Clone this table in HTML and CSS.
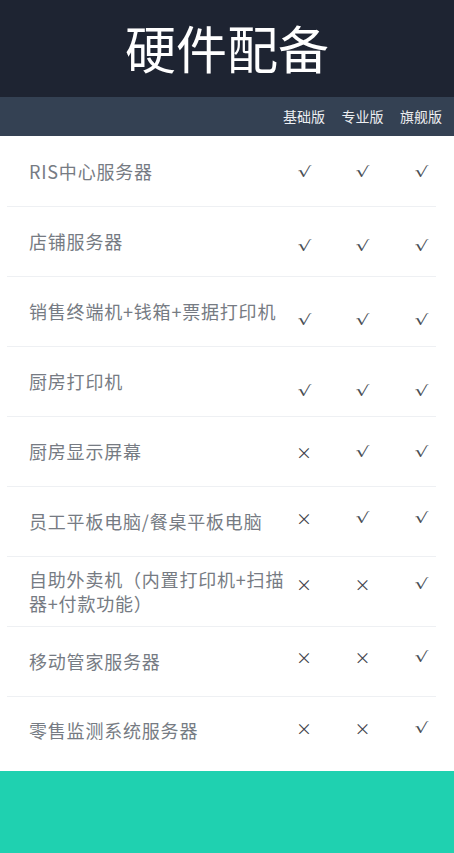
FILE: index.html
```html
<!DOCTYPE html>
<html lang="zh-CN">
<head>
<meta charset="utf-8">
<title>硬件配备</title>
<link rel="stylesheet" href="styles.css">
</head>
<body>
<header class="hero">
  <h1 class="hero-title">硬件配备</h1>
</header>
<div class="tiers">
  <div class="tiers-spacer"></div>
  <div class="cell">基础版</div>
  <div class="cell">专业版</div>
  <div class="cell">旗舰版</div>
</div>
<main class="list">
  <div class="row first">
    <div class="label">RIS中心服务器</div>
    <div class="marks p25"><span class="cell"><i class="ok">√</i></span><span class="cell"><i class="ok">√</i></span><span class="cell"><i class="ok">√</i></span></div>
  </div>
  <div class="row">
    <div class="label">店铺服务器</div>
    <div class="marks p29"><span class="cell"><i class="ok">√</i></span><span class="cell"><i class="ok">√</i></span><span class="cell"><i class="ok">√</i></span></div>
  </div>
  <div class="row">
    <div class="label">销售终端机+钱箱+票据打印机</div>
    <div class="marks p33"><span class="cell"><i class="ok">√</i></span><span class="cell"><i class="ok">√</i></span><span class="cell"><i class="ok">√</i></span></div>
  </div>
  <div class="row">
    <div class="label">厨房打印机</div>
    <div class="marks p34"><span class="cell"><i class="ok">√</i></span><span class="cell"><i class="ok">√</i></span><span class="cell"><i class="ok">√</i></span></div>
  </div>
  <div class="row">
    <div class="label">厨房显示屏幕</div>
    <div class="marks p25"><span class="cell">×</span><span class="cell"><i class="ok">√</i></span><span class="cell"><i class="ok">√</i></span></div>
  </div>
  <div class="row">
    <div class="label">员工平板电脑/餐桌平板电脑</div>
    <div class="marks p21"><span class="cell">×</span><span class="cell"><i class="ok">√</i></span><span class="cell"><i class="ok">√</i></span></div>
  </div>
  <div class="row">
    <div class="label">自助外卖机（内置打印机+扫描器+付款功能）</div>
    <div class="marks p17"><span class="cell">×</span><span class="cell">×</span><span class="cell"><i class="ok">√</i></span></div>
  </div>
  <div class="row">
    <div class="label">移动管家服务器</div>
    <div class="marks p20"><span class="cell">×</span><span class="cell">×</span><span class="cell"><i class="ok">√</i></span></div>
  </div>
  <div class="row last">
    <div class="label">零售监测系统服务器</div>
    <div class="marks p21"><span class="cell">×</span><span class="cell">×</span><span class="cell"><i class="ok">√</i></span></div>
  </div>
</main>
<footer class="foot"></footer>
</body>
</html>
```
FILE: styles.css
```css
* { box-sizing: border-box; }
html, body { margin: 0; padding: 0; }
body {
  width: 454px;
  background: #ffffff;
  font-family: "Noto Sans CJK SC", sans-serif;
}
.hero {
  height: 97px;
  background: #1e2432;
  display: flex;
  align-items: center;
  justify-content: center;
}
.hero-title {
  margin: 0;
  color: #ffffff;
  font-family: "Noto Sans CJK SC", sans-serif;
  font-weight: 400;
  font-size: 51px;
  line-height: 1;
  padding-bottom: 2px;
}
.tiers {
  height: 39px;
  background: #344153;
  display: flex;
  align-items: center;
  gap: 28.5px;
  padding: 0 18px 1px 7px;
  color: #eceef1;
  font-family: "Noto Sans CJK SC", sans-serif;
  font-size: 14px;
}
.tiers-spacer { flex: 1; margin-right: -28.5px; }
.cell {
  width: 30px;
  height: 20px;
  display: flex;
  align-items: center;
  justify-content: center;
  white-space: nowrap;
}
.list {
  padding: 1px 18px 2px 7px;
}
.row {
  height: 70px;
  display: flex;
  border-bottom: 1px solid #eef0f3;
}
.row.last { border-bottom: none; height: 72px; }
.label {
  width: 282px;
  padding: 0 0 1px 22px;
  align-self: center;
  color: #767b83;
  font-family: "Noto Sans CJK SC", sans-serif;
  font-size: 18px;
  line-height: 24px;
  letter-spacing: 0.8px;
}
.row.last .label { padding-bottom: 7px; }
.marks {
  flex: 1;
  display: flex;
  gap: 28.5px;
  color: #3f444b;
  font-family: "Noto Sans CJK SC", sans-serif;
  font-size: 16px;
  line-height: 20px;
}
.ok {
  font-style: normal;
  display: inline-block;
  font-family: "DejaVu Sans", sans-serif;
  font-size: 14px;
  line-height: 14px;
  color: #4a4f56;
  transform: scaleX(1.55);
}
.p17 { padding-top: 17px; }
.p20 { padding-top: 20px; }
.p21 { padding-top: 21px; }
.p25 { padding-top: 25px; }
.p29 { padding-top: 29px; }
.p33 { padding-top: 33px; }
.p34 { padding-top: 34px; }
.foot {
  height: 82px;
  background: #1fd1b0;
}
```
